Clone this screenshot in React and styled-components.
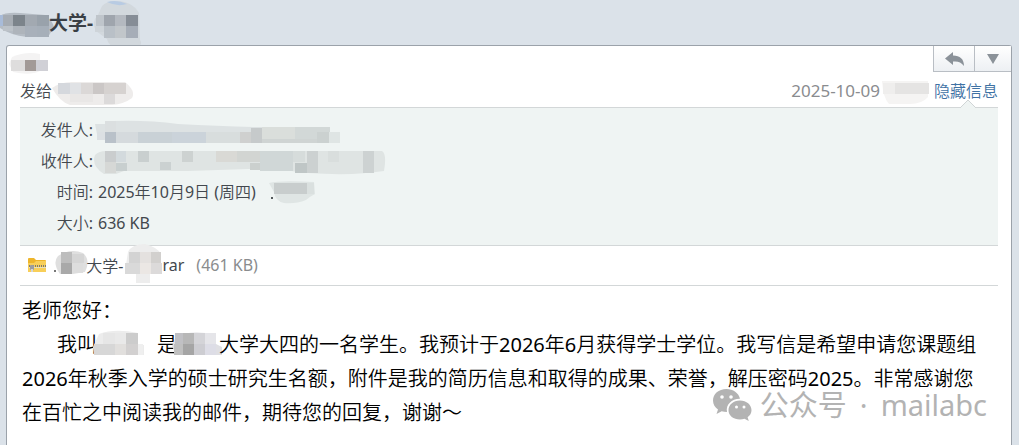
import React from 'react';
import styled, { createGlobalStyle } from 'styled-components';

const GlobalStyle = createGlobalStyle`
  * { box-sizing: border-box; }
  body {
    margin: 0;
    background: #dbe2e9;
    color: #43484e;
    font-family: "Noto Sans", "Noto Sans CJK SC DemiLight", "Noto Sans CJK SC", sans-serif;
    font-size: 16px;
    font-weight: 400;
  }
`;

const Page = styled.div`
  display: flex;
  flex-direction: column;
  min-height: 100vh;
`;

const Subject = styled.h1`
  display: flex;
  align-items: center;
  margin: 0;
  height: 45px;
  font-family: "Noto Sans", "Noto Sans CJK SC", sans-serif;
  font-size: 19px;
  line-height: 28px;
  font-weight: 700;
  color: #3a3f45;
`;

const Panel = styled.main`
  position: relative;
  flex: 1;
  margin: 0 7px 0 6px;
  background: #fff;
  border: 1px solid #9ba2aa;
  border-bottom: 0;
  border-radius: 3px 3px 0 0;
`;

const TopRow = styled.div`
  display: flex;
  justify-content: space-between;
  align-items: flex-start;
  height: 29px;
  padding-left: 13px;
`;

const Sender = styled.div`
  display: flex;
  padding-top: 8px;
`;

const Actions = styled.div`
  display: flex;
`;

const ActionButton = styled.button`
  display: flex;
  align-items: center;
  justify-content: center;
  width: ${(p) => p.$width}px;
  height: 26px;
  padding: 0;
  border: solid #b9bec4;
  border-width: 0 0 1px 1px;
  background: linear-gradient(#ffffff, #edf0f3);
`;

const Content = styled.div`
  padding: 0 13px;
`;

const MetaRow = styled.div`
  display: flex;
  align-items: center;
  justify-content: space-between;
  height: 32px;
  padding-bottom: 2px;
`;

const MetaGroup = styled.div`
  display: flex;
  align-items: center;
`;

const DateText = styled.time`
  color: #8a8c8f;
  font-size: 17px;
`;

const ToggleLink = styled.a`
  position: relative;
  color: #3f72a4;
  text-decoration: none;
`;

const Notch = styled.svg`
  position: absolute;
  left: 26px;
  bottom: -6px;
`;

const Details = styled.dl`
  display: grid;
  grid-template-columns: 73px 1fr;
  column-gap: 5px;
  margin: 0;
  padding: 7px 0 6px;
  border: solid #d3d7d8;
  border-width: 1px 0;
  background: #eff4f3;
  line-height: 31px;
`;

const Label = styled.dt`
  text-align: right;
`;

const Value = styled.dd`
  display: flex;
  align-items: center;
  gap: 10px;
  margin: 0;
`;

const Attachment = styled.div`
  display: flex;
  align-items: center;
  height: 40px;
  padding: 0 0 2px 7px;
  border-bottom: 1px solid #d3d7d8;
`;

const FileLink = styled.a`
  display: flex;
  align-items: center;
  color: #43484e;
  text-decoration: none;
`;

const FileSize = styled.span`
  margin-left: 12px;
  color: #8a8c8e;
`;

const Letter = styled.article`
  padding: 8px 10px 15px 2px;
  color: #000;
  font-size: 20px;
  line-height: 34px;
`;

const Paragraph = styled.p`
  margin: 0;
  text-indent: ${(p) => (p.$indent ? 35 : 0)}px;
`;

const Watermark = styled.div`
  position: absolute;
  right: 24px;
  bottom: 20px;
  display: flex;
  align-items: center;
  gap: 8px;
  color: #b3b3b3;
  font-family: "Noto Sans", "Noto Sans CJK SC", sans-serif;
  font-size: 29px;
  line-height: 40px;
`;

const WatermarkText = styled.span`
  display: flex;
  gap: 13px;
`;

const MosaicSvg = styled.svg`
  display: inline-block;
  flex: none;
  vertical-align: middle;
  overflow: visible;
`;

/* A blurred-out name: a soft backing shape with coarse colour cells on it. */
function Mosaic({ width, height, backing, cells }) {
  return (
    <MosaicSvg width={width} height={height} aria-hidden="true">
      {backing.map(([d, fill], i) => (
        <path key={i} d={d} fill={fill} />
      ))}
      {cells.map(([x, y, w, h, fill], i) => (
        <rect key={i} x={x} y={y} width={w} height={h} fill={fill} />
      ))}
    </MosaicSvg>
  );
}

const masks = {
  school: {
    width: 49, height: 45,
    backing: [['M0 16Q5 12 20 13L45 15Q52 20 54 27L48 37H27Q10 35 0 28Z', '#b5bcc4']],
    cells: [[0, 15, 3, 11, '#a8bbd8'], [3, 15, 10, 11, '#a6acb3'], [13, 15, 12, 11, '#7c848b'], [25, 15, 12, 11, '#a2a9b1'], [37, 15, 12, 11, '#99a2ab'], [3, 26, 10, 5, '#bcc2c8'], [13, 26, 12, 8, '#aeb4bb'], [25, 26, 12, 11, '#a8b0ba'], [37, 26, 12, 11, '#a6afb9']],
  },
  student: {
    width: 48, height: 45,
    backing: [['M9 6Q14 1 23 1Q39 1 46 13L47 40Q51 46 40 48H25Q15 46 14 39L3 31Q-2 22 5 15Z', '#d2d8dd'], ['M14 2Q24 -1 34 4Q24 7 14 2Z', '#b8cbe3']],
    cells: [[3, 15, 8, 11, '#bfc5cb'], [11, 15, 11, 11, '#9fa5ad'], [22, 15, 11, 11, '#b4b9c0'], [33, 15, 12, 11, '#868d96'], [2, 26, 9, 6, '#ced4d9'], [11, 26, 11, 12, '#b9c0c7'], [22, 26, 11, 12, '#c1c6ca'], [33, 26, 12, 12, '#a6adb7']],
  },
  sender: {
    width: 28, height: 20,
    backing: [['M-8 3Q6 -3 20 0V17Q10 22 -7 18L-11 10Z', '#f4f3f3']],
    cells: [[-9, 6, 14, 11, '#dedddd'], [5, 6, 11, 11, '#a29a97'], [16, 6, 12, 11, '#d0d0d6']],
  },
  to: {
    width: 80, height: 24,
    backing: [['M0 10Q8 4 20 4H73Q84 13 80 20Q72 26 60 27H18Q8 24 0 10Z', '#eeeceb']],
    cells: [[6, 5, 12, 11, '#d5d8dd'], [18, 5, 11, 11, '#e0e2e5'], [29, 5, 12, 11, '#dbd8d7'], [41, 5, 11, 11, '#cbc7c6'], [52, 5, 22, 11, '#d6d2d0'], [18, 16, 23, 8, '#e9e7e6'], [52, 16, 11, 10, '#dcdada']],
  },
  time: {
    width: 54, height: 24,
    backing: [['M2 3H48V19Q42 26 30 26H9Q3 20 2 3Z', '#f5f4f3']],
    cells: [[3, 5, 12, 11, '#efeeed'], [15, 5, 34, 11, '#e5e4e3']],
  },
  from: {
    width: 240, height: 31,
    backing: [['M-3 9H16V6Q50 5 80 9Q120 11 155 12H231V19H242V20Q235 25 200 24H0Z', '#dde2e3']],
    cells: [[7, 6, 11, 11, '#dbdfe0'], [-1, 17, 8, 8, '#dce0e3'], [7, 17, 11, 11, '#b9c1c9'], [18, 17, 22, 11, '#d5dadd'], [40, 17, 34, 11, '#c9d1d6'], [74, 17, 34, 11, '#cbd3da'], [108, 17, 34, 11, '#d8dddd'], [142, 17, 11, 11, '#cfd0cf'], [153, 13, 11, 15, '#c6cacb'], [164, 12, 33, 12, '#dadedb'], [197, 12, 35, 12, '#d2d8d7'], [164, 24, 55, 4, '#cfd4d3'], [219, 17, 12, 11, '#cbd1d0'], [231, 17, 11, 11, '#dfe5e4']],
  },
  recipient: {
    width: 285, height: 31,
    backing: [['M-3 9Q1 5 8 5H284Q289 8 286 25Q255 30 210 27Q190 25 176 22L90 25H26L18 28H6Q-7 20 -3 9Z', '#dfe4e3']],
    cells: [[7, 5, 11, 11, '#cacdce'], [18, 5, 10, 11, '#d3dadd'], [7, 16, 11, 11, '#d6d8d6'], [18, 17, 11, 8, '#c8cfcf'], [40, 5, 11, 11, '#c9cfcf'], [62, 16, 11, 8, '#cbd1d1'], [84, 5, 11, 11, '#cdd2d1'], [118, 5, 21, 11, '#d9d9d5'], [139, 5, 23, 11, '#d2d5d2'], [152, 17, 13, 7, '#cbd0ce'], [162, 5, 33, 20, '#d0d7d7'], [195, 5, 12, 11, '#d6dcdb'], [197, 17, 12, 10, '#bfc6c6'], [209, 5, 11, 22, '#ccd1d1'], [230, 5, 11, 11, '#d9dedd'], [265, 5, 11, 22, '#cdd2d2']],
  },
  clock: {
    width: 50, height: 31,
    backing: [['M3 6Q14 3 48 5L49 17Q43 20 40 23Q30 27 18 26Q9 24 8 15Z', '#dfe5e4']],
    cells: [[8, 6, 33, 11, '#c8cdcd'], [41, 6, 7, 11, '#dae0df'], [5, 20, 2, 2, '#53595b']],
  },
  filePrefix: {
    width: 31, height: 40,
    backing: [['M3 11Q15 3 28 8Q36 15 30 27L18 29H5Q-3 18 3 11Z', '#dfdfdf']],
    cells: [[6, 7, 11, 11, '#bdbdbd'], [17, 9, 12, 9, '#d5d5d5'], [6, 18, 11, 11, '#a9a9a9'], [17, 18, 11, 10, '#dddddd'], [-1, 25, 2, 2, '#777777']],
  },
  fileSuffix: {
    width: 39, height: 40,
    backing: [['M5 7Q9 -1 22 -1Q34 2 38 9V28H27V38H13V29L2 26Z', '#ededed']],
    cells: [[6, 7, 11, 11, '#d3d3d3'], [17, 7, 11, 11, '#e4e1df'], [28, 7, 10, 11, '#d2d0ce'], [2, 18, 15, 11, '#d9d9d9'], [17, 18, 11, 11, '#ebe7e4'], [28, 18, 11, 11, '#dcdada']],
  },
  name: {
    width: 60, height: 30,
    backing: [['M-4 15L2 2Q18 -4 41 1V13H47V23H-3Z', '#ececec']],
    cells: [[6, 1, 12, 11, '#e6e6e6'], [18, 1, 11, 11, '#e9e9e9'], [29, 1, 12, 11, '#cccccc'], [-3, 12, 21, 11, '#d7d7d7'], [18, 12, 11, 11, '#e1dfdd'], [29, 12, 12, 11, '#d2d0d0'], [41, 12, 5, 11, '#efefef']],
  },
  university: {
    width: 42, height: 30,
    backing: [['M-1 4Q12 -2 39 2V12L45 15V23H-1L-5 14Z', '#dfdfe3']],
    cells: [[-2, 1, 8, 11, '#c0c0c4'], [6, 1, 11, 11, '#b7b7b7'], [17, 1, 11, 11, '#d4d4d8'], [28, 1, 11, 11, '#e5e5e9'], [-3, 12, 9, 11, '#bfbfbf'], [6, 12, 11, 11, '#a5a5a5'], [17, 12, 11, 11, '#cdcdd2'], [28, 12, 11, 11, '#dddde6']],
  },
};

const ReplyIcon = () => (
  <svg width="21" height="16" viewBox="0 0 21 16" aria-hidden="true">
    <path d="M9 1V4.500C16 4.500 20 8 20 15C17 11 14 10 9 10.500V14L1 7.500Z" fill="#8b9299" />
  </svg>
);

const ArrowIcon = () => (
  <svg width="14" height="11" viewBox="0 0 14 11" aria-hidden="true">
    <path d="M1 1H13L7 11Z" fill="#8b9299" />
  </svg>
);

const ArchiveIcon = () => (
  <svg width="20" height="16" viewBox="0 0 20 16" aria-hidden="true">
    <path d="M1 2Q1 1 2 1H7L9 3H18Q19 3 19 4V14Q19 15 18 15H2Q1 15 1 14Z" fill="#eeb52b" />
    <path d="M1 6H7L9 4H19V14Q19 15 18 15H2Q1 15 1 14Z" fill="#f8cf59" />
    <path d="M2 9H19" stroke="#7e7b70" strokeWidth="2" strokeDasharray="1 1" />
    <path d="M2 10.500H19" stroke="#e9e0bb" />
    <rect x="3" y="8" width="4" height="5" rx="1" fill="#9b9da0" />
    <path d="M4 12V15H6V12" fill="#d5d6d8" />
  </svg>
);

const WeChatIcon = () => (
  <svg width="40" height="34" viewBox="0 0 40 34" aria-hidden="true">
    <path fill="#b3b3b3" d="M14.500 1C6.500 1 1 6 1 12.500C1 16.300 3 19.500 6 21.600L4.500 26L9.700 23.300Q12 24 15 24C13.500 16.500 20 10.500 28 10.700C26.800 5 21 1 14.500 1Z" />
    <path fill="#b3b3b3" d="M28 12.500C21 12.500 16.500 17 16.500 22.200C16.500 27.600 21.500 31.500 28 31.500Q30.500 31.500 32.500 30.800L36.800 33L35.600 29.300C38 27.500 39.500 25 39.500 22.200C39.500 16.800 34.500 12.500 28 12.500Z" />
    <g fill="#fff">
      <circle cx="10" cy="9" r="1.800" />
      <circle cx="19" cy="9" r="1.800" />
      <circle cx="24.500" cy="19" r="1.500" />
      <circle cx="32" cy="19" r="1.500" />
    </g>
  </svg>
);

export default function App() {
  return (
    <Page lang="zh-CN">
      <GlobalStyle />
      <Subject>
        <Mosaic {...masks.school} />
        大学-
        <Mosaic {...masks.student} />
      </Subject>
      <Panel>
        <TopRow>
          <Sender><Mosaic {...masks.sender} /></Sender>
          <Actions>
            <ActionButton $width={41} type="button" aria-label="回复"><ReplyIcon /></ActionButton>
            <ActionButton $width={37} type="button" aria-label="更多"><ArrowIcon /></ActionButton>
          </Actions>
        </TopRow>
        <Content>
          <MetaRow>
            <MetaGroup>
              <span>发给</span>
              <Mosaic {...masks.to} />
            </MetaGroup>
            <MetaGroup>
              <DateText>2025-10-09</DateText>
              <Mosaic {...masks.time} />
              <ToggleLink href="#details">
                隐藏信息
                <Notch width="16" height="9" viewBox="0 0 16 9" aria-hidden="true">
                  <path d="M0 9L8 1L16 9" fill="#eff4f3" stroke="#d0d5d6" />
                </Notch>
              </ToggleLink>
            </MetaGroup>
          </MetaRow>
          <Details id="details">
            <Label>发件人:</Label>
            <Value><Mosaic {...masks.from} /></Value>
            <Label>收件人:</Label>
            <Value><Mosaic {...masks.recipient} /></Value>
            <Label>时间:</Label>
            <Value>2025年10月9日 (周四)<Mosaic {...masks.clock} /></Value>
            <Label>大小:</Label>
            <Value>636 KB</Value>
          </Details>
          <Attachment>
            <FileLink href="#attachment">
              <ArchiveIcon />
              &nbsp;&nbsp;
              <Mosaic {...masks.filePrefix} />
              大学-
              <Mosaic {...masks.fileSuffix} />
              rar
            </FileLink>
            <FileSize>(461 KB)</FileSize>
          </Attachment>
          <Letter>
            <Paragraph>老师您好：</Paragraph>
            <Paragraph $indent>
              我叫<Mosaic {...masks.name} />是<Mosaic {...masks.university} />大学大四的一名学生。我预计于2026年6月获得学士学位。我写信是希望申请您课题组2026年秋季入学的硕士研究生名额，附件是我的简历信息和取得的成果、荣誉，解压密码2025。非常感谢您在百忙之中阅读我的邮件，期待您的回复，谢谢～
            </Paragraph>
          </Letter>
        </Content>
        <Watermark>
          <WeChatIcon />
          <WatermarkText>
            <span>公众号</span>
            <span>·</span>
            <span>mailabc</span>
          </WatermarkText>
        </Watermark>
      </Panel>
    </Page>
  );
}
